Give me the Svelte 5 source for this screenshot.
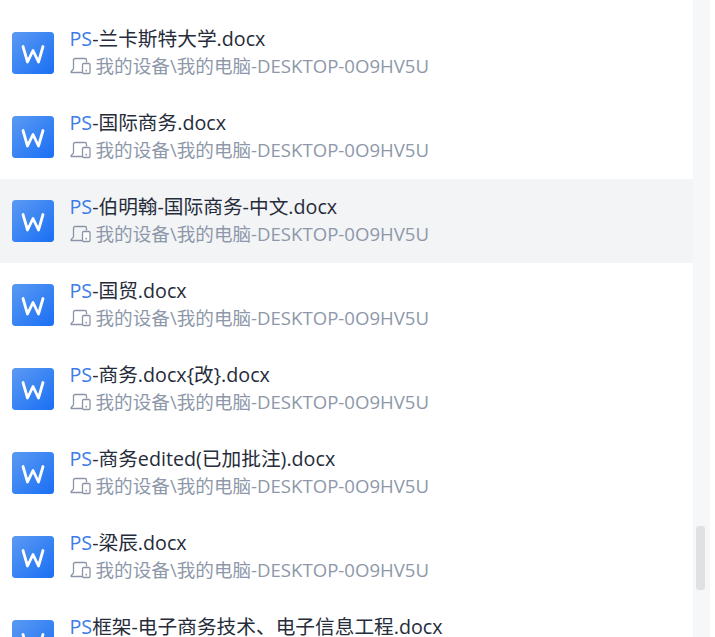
<script>
  const suffix = '我的设备\\我的电脑-DESKTOP-0O9HV5U';
  const rows = [
    { rest: '-兰卡斯特大学.docx' },
    { rest: '-国际商务.docx' },
    { rest: '-伯明翰-国际商务-中文.docx', active: true },
    { rest: '-国贸.docx' },
    { rest: '-商务.docx{改}.docx' },
    { rest: '-商务edited(已加批注).docx' },
    { rest: '-梁辰.docx' },
    { rest: '框架-电子商务技术、电子信息工程.docx' }
  ];
</script>

<div class="page">
  <div class="list">
    {#each rows as row}
      <div class="row" class:active={row.active}>
        <svg class="doc" viewBox="0 0 42 42" aria-hidden="true">
          <defs>
            <linearGradient id="g" x1="0" y1="0" x2="1" y2="1">
              <stop offset="0" stop-color="#5b9af2" />
              <stop offset="1" stop-color="#1a6ff5" />
            </linearGradient>
          </defs>
          <rect width="42" height="42" rx="3.5" fill="url(#g)" />
          <path d="M11 14.5 L15.5 30 L21 18.5 L26.5 30 L31 14.5" fill="none" stroke="#fff" stroke-width="2.8" stroke-linejoin="round" stroke-linecap="round" />
        </svg>
        <div class="text">
          <div class="title"><span class="ps">PS</span>{row.rest}</div>
          <div class="path">
            <svg class="device" viewBox="0 0 22 18" aria-hidden="true">
              <path d="M3.5 12 V3 a1.5 1.5 0 0 1 1.5 -1.5 H15 a1.5 1.5 0 0 1 1.5 1.5 V5.5 M3.5 12 L1.2 14.5 V15.5 H12" fill="none" stroke="#8a94a6" stroke-width="1.3" />
              <rect x="12.5" y="6.5" width="7.5" height="10" rx="1.2" fill="#fff" stroke="#8a94a6" stroke-width="1.3" />
              <circle cx="16.2" cy="13.6" r="0.9" fill="#8a94a6" />
            </svg>
            <span>{suffix}</span>
          </div>
        </div>
      </div>
    {/each}
  </div>
  <div class="track"><div class="thumb"></div></div>
</div>

<style>
  :global(body) {
    margin: 0;
    background: #fff;
  }
  .page {
    display: flex;
    width: 715px;
    height: 637px;
    overflow: hidden;
    background: #fff;
    font-family: "Open Sans", "Noto Sans CJK SC", sans-serif;
  }
  .list {
    width: 693px;
    flex: none;
    padding-top: 11px;
  }
  .row {
    display: flex;
    align-items: center;
    gap: 15.5px;
    height: 84px;
    padding-left: 12px;
  }
  .row.active {
    background: #f3f4f6;
  }
  .doc {
    width: 42px;
    height: 42px;
    flex: none;
  }
  .text {
    min-width: 0;
    white-space: nowrap;
    padding-bottom: 2px;
  }
  .title {
    font-size: 19.7px;
    line-height: 28px;
    color: #262c3a;
  }
  .ps {
    color: #3b7ce8;
  }
  .path {
    display: flex;
    align-items: center;
    gap: 4px;
    font-size: 18.6px;
    line-height: 26px;
    color: #8e98aa;
  }
  .device {
    width: 22px;
    height: 18px;
    flex: none;
  }
  .track {
    position: relative;
    width: 17px;
    flex: none;
    background: #f6f7f8;
  }
  .thumb {
    position: absolute;
    left: 3px;
    top: 526px;
    width: 9px;
    height: 64px;
    border-radius: 3px;
    background: #dfe1e3;
  }
</style>
